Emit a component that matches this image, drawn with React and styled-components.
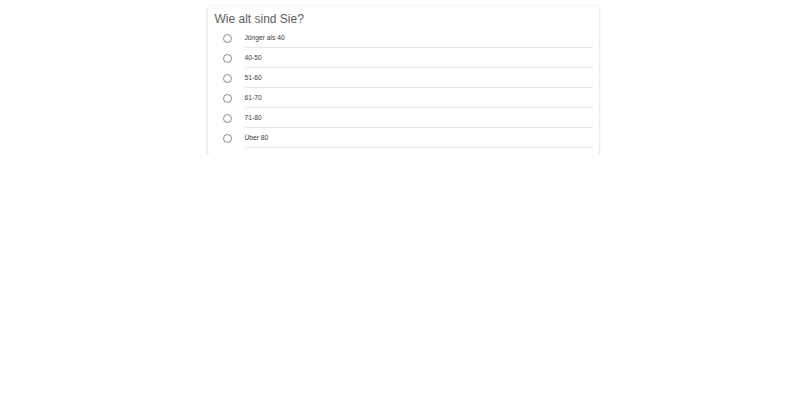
import React from "react";
import styled, { createGlobalStyle } from "styled-components";

const Global = createGlobalStyle`
  html, body { margin: 0; padding: 0; background: #fff; }
  body { font-family: "Liberation Sans", Arial, sans-serif; }
`;

const Page = styled.div`
  display: flex;
  justify-content: center;
  padding-top: 6px;
`;

const Card = styled.div`
  width: 391px;
  box-sizing: border-box;
  background: #fff;
  padding: 5px 6px 6px 7px;
  border-radius: 2px;
  box-shadow: 0 1px 3px rgba(0, 0, 0, 0.22), 0 0 1px rgba(0, 0, 0, 0.06);
`;

const Title = styled.h2`
  margin: 0;
  font-size: 12px;
  font-weight: 400;
  line-height: 17px;
  color: #606060;
`;

const List = styled.div`
  display: flex;
  flex-direction: column;
`;

const Row = styled.label`
  display: flex;
  align-items: stretch;
  height: 20px;
`;

const RadioCell = styled.div`
  width: 30px;
  display: flex;
  align-items: center;
  padding-left: 8px;
  box-sizing: border-box;
`;

const Radio = styled.span`
  width: 9px;
  height: 9px;
  box-sizing: border-box;
  border: 1px solid #8a8a8a;
  border-radius: 50%;
  display: block;
`;

const Label = styled.div`
  flex: 1;
  display: flex;
  align-items: center;
  border-bottom: 1px solid #e6e6e6;
  font-size: 6.7px;
  color: #3a3a3a;
`;

const options = ["Jünger als 40", "40-50", "51-60", "61-70", "71-80", "Über 80"];

export default function App() {
  return (
    <>
      <Global />
      <Page>
        <Card>
          <Title>Wie alt sind Sie?</Title>
          <List>
            {options.map((o) => (
              <Row key={o}>
                <RadioCell>
                  <Radio />
                </RadioCell>
                <Label>{o}</Label>
              </Row>
            ))}
          </List>
        </Card>
      </Page>
    </>
  );
}
